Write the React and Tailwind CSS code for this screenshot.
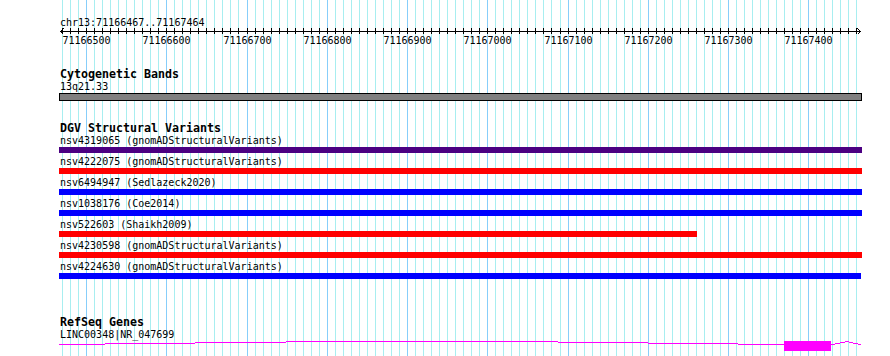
import React from "react";

const START = 71166467;
const SCALE = 0.8026;
const X0 = 59;
const px = (bp) => Math.round(59.5 + (bp - START) * SCALE);

const gridBps = [];
for (let b = 71166470; b <= 71167460; b += 10) gridBps.push(b);
const majorBps = gridBps.filter((b) => b % 100 === 0);

const variants = [
  { label: "nsv4319065 (gnomADStructuralVariants)", color: "bg-[#4b0082]", w: 803 },
  { label: "nsv4222075 (gnomADStructuralVariants)", color: "bg-[#ff0000]", w: 803 },
  { label: "nsv6494947 (Sedlazeck2020)", color: "bg-[#0000ff]", w: 803 },
  { label: "nsv1038176 (Coe2014)", color: "bg-[#0000ff]", w: 803 },
  { label: "nsv522603 (Shaikh2009)", color: "bg-[#ff0000]", w: 638 },
  { label: "nsv4230598 (gnomADStructuralVariants)", color: "bg-[#ff0000]", w: 803 },
  { label: "nsv4224630 (gnomADStructuralVariants)", color: "bg-[#0000ff]", w: 802 },
];

// gene intron steps: [x1, x2, row] in page coords
const intronSteps = [
  [59, 105, 344],
  [105, 195, 343],
  [195, 286, 342],
  [286, 558, 341],
  [558, 648, 342],
  [648, 738, 343],
  [738, 784, 344],
  [831, 835, 344],
  [835, 840, 343],
  [840, 845, 342],
  [845, 849, 341],
  [849, 853, 342],
  [853, 858, 343],
  [858, 861, 344],
];

function Title({ children, className = "" }) {
  return (
    <div className={"h-[12px] pl-px text-[11.63px] font-bold leading-[10px] whitespace-pre " + className}>
      {children}
    </div>
  );
}

function Label({ children }) {
  return <div className="h-[12px] pl-px text-[10px] leading-[11px] whitespace-pre">{children}</div>;
}

export default function App() {
  return (
    <div className="relative w-[890px] h-[356px] overflow-hidden bg-white text-black font-['DejaVu_Sans_Mono',monospace]">
      <svg className="absolute left-0 top-0" width="890" height="356">
        {gridBps.map((b) => (
          <rect
            key={b}
            x={px(b)}
            y={0}
            width={1}
            height={356}
            fill={b % 100 === 0 ? "#87cefa" : "#a8eef0"}
          />
        ))}
      </svg>

      <div className="relative flex flex-col pl-[59px]">
        {/* Ruler */}
        <div className="h-[28px] pt-[18px] pl-px text-[10px] leading-[9px] whitespace-pre">
          chr13:71166467..71167464
        </div>
        <svg width="803" height="7" shapeRendering="crispEdges" className="block">
          <rect x={1} y={3} width={801} height={1} fill="#000" />
          {gridBps.map((b) => (
            <rect key={b} x={px(b) - X0} y={0} width={1} height={6} fill="#000" />
          ))}
          <path d="M1.5 3.5 L4.5 0.5 M1.5 3.5 L4.5 6.5" stroke="#000" strokeWidth="1" fill="none" />
          <path d="M801.5 3.5 L798.5 0.5 M801.5 3.5 L798.5 6.5" stroke="#000" strokeWidth="1" fill="none" />
        </svg>
        <div className="relative h-[12px] text-[10px] leading-[11px]">
          {majorBps.map((b) => (
            <span
              key={b}
              className="absolute top-0 -translate-x-1/2 whitespace-pre"
              style={{ left: px(b) - X0 + 0.5 }}
            >
              {b}
            </span>
          ))}
        </div>

        {/* Cytogenetic Bands */}
        <Title className="mt-[22px]">Cytogenetic Bands</Title>
        <Label>13q21.33</Label>
        <div className="h-[8px] w-[803px] border border-black bg-[#808080]" />

        {/* DGV */}
        <Title className="mt-[22px]">DGV Structural Variants</Title>
        <div className="flex flex-col gap-[3px]">
          {variants.map((v) => (
            <div key={v.label} className="flex flex-col">
              <Label>{v.label}</Label>
              <div className={"h-[6px] " + v.color} style={{ width: v.w }} />
            </div>
          ))}
        </div>

        {/* RefSeq */}
        <Title className="mt-[38px]">RefSeq Genes</Title>
        <Label>LINC00348|NR_047699</Label>
        <svg width="803" height="11" shapeRendering="crispEdges" className="block">
          {intronSteps.map(([a, b, r], i) => (
            <rect key={i} x={a - X0} y={r - 341} width={b - a} height={1} fill="#ff00ff" />
          ))}
          <rect x={784 - X0} y={0} width={47} height={10} fill="#ff00ff" />
        </svg>
      </div>
    </div>
  );
}
